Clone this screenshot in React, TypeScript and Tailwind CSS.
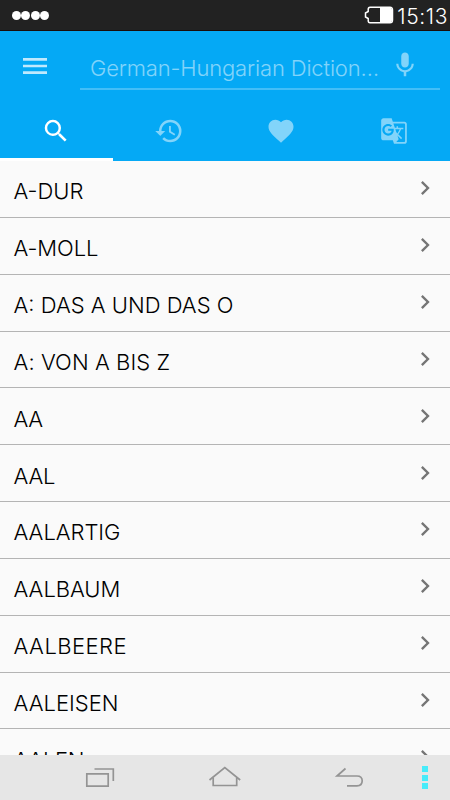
import type { ReactNode } from "react";
import {
  MdChevronRight,
  MdFavorite,
  MdGTranslate,
  MdHistory,
  MdMenu,
  MdMic,
  MdSearch,
} from "react-icons/md";

interface Tab {
  name: string;
  icon: ReactNode;
}

interface Entry {
  word: string;
  tracking?: string;
}

const tabs: Tab[] = [
  { name: "search", icon: <MdSearch size={30} /> },
  { name: "history", icon: <MdHistory size={30} /> },
  { name: "favorites", icon: <MdFavorite size={30} /> },
  { name: "translate", icon: <MdGTranslate size={28} /> },
];

const entries: Entry[] = [
  { word: "A-DUR" },
  { word: "A-MOLL", tracking: "tracking-[-0.1px]" },
  { word: "A: DAS A UND DAS O" },
  { word: "A: VON A BIS Z", tracking: "tracking-[0.08px]" },
  { word: "AA", tracking: "tracking-[-0.4px]" },
  { word: "AAL", tracking: "tracking-[-0.2px]" },
  { word: "AALARTIG", tracking: "tracking-[-0.05px]" },
  { word: "AALBAUM", tracking: "tracking-[-0.05px]" },
  { word: "AALBEERE", tracking: "tracking-[0.45px]" },
  { word: "AALEISEN" },
  { word: "AALEN", tracking: "tracking-[-0.3px]" },
];

function StatusBar() {
  return (
    <div className="flex h-[31px] shrink-0 items-center justify-between border-b border-[#1a0d0b] bg-[#222222] pl-[11.5px] pr-[2px] text-white">
      <div className="flex gap-[0.5px]">
        {[0, 1, 2, 3].map((dot) => (
          <span key={dot} className="size-[9px] rounded-full bg-white" />
        ))}
      </div>
      <div className="flex items-center gap-[3px]">
        <svg width="30" height="18" viewBox="0 0 30 18" fill="none">
          <path
            d="M6 1.2H26Q28.5 1.2 28.5 4V14Q28.5 16.8 26 16.8H6Q4.2 16.8 4.2 14.5V12.5L1.5 11V7L4.2 5.5V3.5Q4.2 1.2 6 1.2Z"
            stroke="white"
            strokeWidth="1.5"
          />
          <path d="M16 1.5H26.5L28.5 4V14L26.5 16.5H16Z" fill="white" />
        </svg>
        <span className="pt-[2px] text-[21px] leading-none font-light tracking-[0.6px]">
          15:13
        </span>
      </div>
    </div>
  );
}

function Header() {
  return (
    <header className="flex h-[130px] shrink-0 flex-col bg-[#05a9f5]">
      <div className="flex h-[70px] pr-2.5">
        <button className="flex w-20 items-start pt-[18.5px] pl-[19px] text-white/75">
          <MdMenu size={32} />
        </button>
        <div className="flex h-[59px] flex-1 items-start justify-between border-b-2 border-white/25 pt-[19px] pr-5 pl-2.5 text-white/50">
          <span className="pt-[3px] text-[22px] leading-[30px] font-light tracking-[-0.16px] whitespace-nowrap">
            German-Hungarian Diction…
          </span>
          <MdMic size={30} />
        </div>
      </div>
      <nav className="grid h-[60px] grid-cols-4">
        {tabs.map((tab, index) => (
          <button
            key={tab.name}
            className={
              index === 0
                ? "flex items-center justify-center border-b-[3px] border-white pt-[3px] text-white"
                : "flex items-center justify-center text-white/50"
            }
          >
            {tab.icon}
          </button>
        ))}
      </nav>
    </header>
  );
}

function NavigationBar() {
  return (
    <footer className="h-[45px] shrink-0 bg-[#e6e6e6]">
      <svg width="450" height="45" viewBox="0 0 450 45" fill="none">
        <g stroke="#949494" strokeWidth="1.7">
          <path d="M86.8 18.8H108.2V31.2H86.8Z" />
          <path d="M94.5 14H113.3V26" />
          <path d="M209.5 25L224.8 12.6L240.2 25" />
          <path d="M213.2 22.5V30.5H236.7V22.5" />
          <path d="M345.5 13.5L337 21H357C360.5 21 362.2 23 362.2 25.8C362.2 28.8 360.5 30.8 357 30.8H347" />
        </g>
        <g fill="#48ecfa">
          <rect x="422" y="11" width="6" height="6" />
          <rect x="422" y="20" width="6" height="6" />
          <rect x="422" y="28" width="6" height="6" />
        </g>
      </svg>
    </footer>
  );
}

export default function App() {
  return (
    <div className="flex h-[800px] w-[450px] flex-col overflow-hidden bg-[#fafafa] font-['Inter','Liberation_Sans',sans-serif]">
      <StatusBar />
      <Header />
      <ul className="min-h-0 flex-1 overflow-hidden">
        {entries.map(({ word, tracking = "tracking-normal" }) => (
          <li
            key={word}
            className="flex h-[56.85px] items-center justify-between border-b border-[#b4b4b4] pr-[11px] pl-[13.5px]"
          >
            <span className={`pt-[5px] text-[22px] leading-7 font-light text-black ${tracking}`}>
              {word}
            </span>
            <MdChevronRight size={28} className="mb-px text-[#757575]" />
          </li>
        ))}
      </ul>
      <NavigationBar />
    </div>
  );
}
